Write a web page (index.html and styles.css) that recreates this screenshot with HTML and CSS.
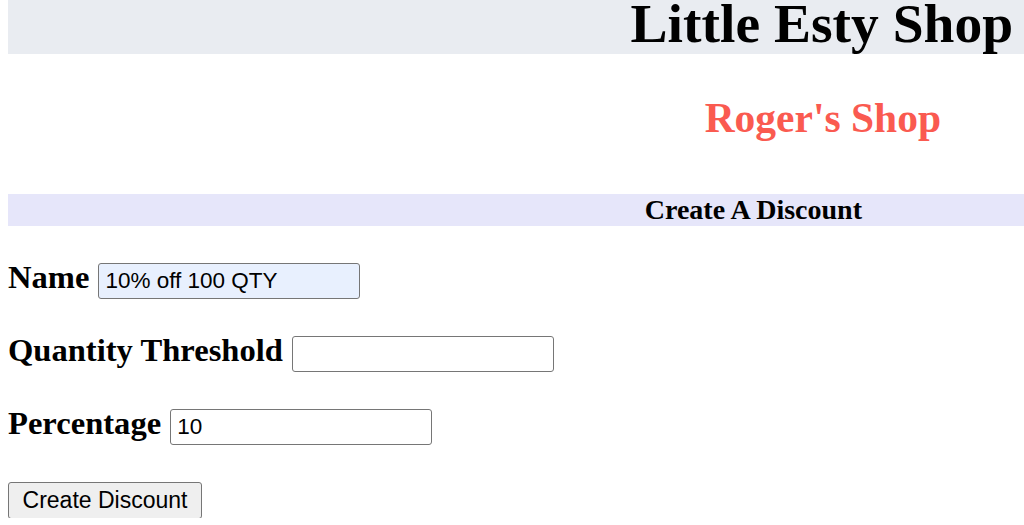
FILE: index.html
```html
<!DOCTYPE html>
<html>
<head>
<meta charset="utf-8">
<title>Little Esty Shop</title>
<link rel="stylesheet" href="styles.css">
</head>
<body>
<header class="topbar">
  <h1 class="title">Little Esty Shop</h1>
</header>
<h2 class="shop">Roger's Shop</h2>
<div class="section-bar">
  <h3 class="section-title">Create A Discount</h3>
</div>
<form class="form">
  <div class="row">
    <label class="lbl" for="name">Name</label>
    <input class="field autofilled" id="name" type="text" value="10% off 100 QTY">
  </div>
  <div class="row">
    <label class="lbl" for="qty">Quantity Threshold</label>
    <input class="field" id="qty" type="text" value="">
  </div>
  <div class="row">
    <label class="lbl" for="pct">Percentage</label>
    <input class="field" id="pct" type="text" value="10">
  </div>
  <div class="row">
    <button class="btn" type="button">Create Discount</button>
  </div>
</form>
</body>
</html>
```
FILE: styles.css
```css
html, body {
  background: #ffffff;
}
body {
  margin: 0 0 0 8px;
  font-family: "Liberation Serif", "Times New Roman", serif;
  color: #000;
}
.topbar {
  background: #e9ecf1;
  height: 54px;
  padding-top: 2px;
  box-sizing: border-box;
  text-align: right;
}
.title {
  margin: 0;
  font-size: 55.5px;
  line-height: 44px;
  font-weight: bold;
  padding-right: 11px;
}
.shop {
  margin: 0;
  padding: 40px 83px 0 0;
  height: 100px;
  box-sizing: border-box;
  text-align: right;
  font-size: 41.5px;
  line-height: 48px;
  color: #fa5a50;
}
.section-bar {
  margin-top: 40px;
  background: #e6e6fa;
  height: 32px;
  text-align: right;
  padding-right: 162px;
}
.section-title {
  margin: 0;
  font-size: 28px;
  line-height: 32px;
}
.form {
  display: flex;
  flex-direction: column;
  gap: 37px;
  margin-top: 37px;
}
.row {
  display: flex;
  align-items: center;
  gap: 9px;
  height: 36px;
}
.lbl {
  font-size: 32.6px;
  font-weight: bold;
  line-height: 1;
  padding-bottom: 8px;
}
.field {
  box-sizing: border-box;
  width: 262px;
  height: 36px;
  margin: 0;
  padding: 1px 6px;
  font-family: "Liberation Sans", Arial, sans-serif;
  font-size: 22.5px;
  color: #000;
  background: #fff;
  border: 1px solid #767676;
  border-radius: 3px;
}
.autofilled {
  background: #e8f0fe;
}
.btn {
  box-sizing: border-box;
  width: 194px;
  height: 37px;
  margin: 0;
  padding: 1px 6px;
  font-family: "Liberation Sans", Arial, sans-serif;
  font-size: 23px;
  color: #000;
  background: #efefef;
  border: 1px solid #767676;
  border-radius: 3px;
}
```
